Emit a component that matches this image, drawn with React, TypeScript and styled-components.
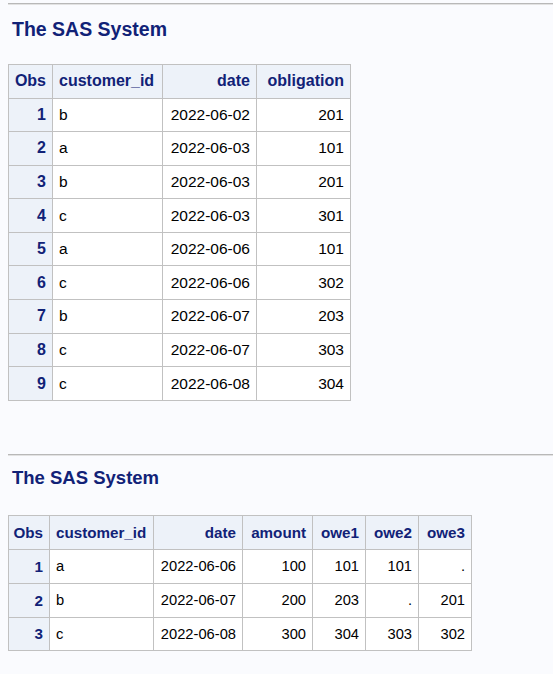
import React from "react";
import styled, { createGlobalStyle } from "styled-components";

const Global = createGlobalStyle`
  html, body { margin: 0; padding: 0; background: #fafbfe; }
  body { font-family: "Liberation Sans", Arial, sans-serif; }
`;

const Page = styled.div`
  padding: 3px 0 0 8px;
  display: flex;
  flex-direction: column;
`;

const Section = styled.section<{ $gapTop: number }>`
  display: flex;
  flex-direction: column;
  align-items: flex-start;
  margin-top: ${(p) => p.$gapTop}px;
`;

const Rule = styled.div`
  align-self: stretch;
  height: 0;
  border-top: 1px solid #b8b8b8;
  border-bottom: 1px solid #e2e2e2;
`;

const Title = styled.h1<{ $size: number; $top: number; $bottom: number }>`
  margin: ${(p) => p.$top}px 0 ${(p) => p.$bottom}px 4px;
  font-size: ${(p) => p.$size}px;
  line-height: 1.15;
  font-weight: bold;
  color: #112277;
`;

const Grid = styled.div<{ $cols: number[]; $rowH: number }>`
  display: grid;
  grid-template-columns: ${(p) => p.$cols.map((c) => c + "px").join(" ")};
  grid-auto-rows: ${(p) => p.$rowH}px;
  gap: 1px;
  border: 1px solid #c1c1c1;
  background: #c1c1c1;
`;

const Cell = styled.div<{ $fs: number; $kind: "head" | "rowhead" | "data"; $align: "left" | "right" }>`
  display: flex;
  align-items: center;
  justify-content: ${(p) => (p.$align === "right" ? "flex-end" : "flex-start")};
  padding: 0 6px;
  background: ${(p) => (p.$kind === "data" ? "#ffffff" : "#edf2f9")};
  color: ${(p) => (p.$kind === "data" ? "#000000" : "#112277")};
  font-weight: ${(p) => (p.$kind === "data" ? "normal" : "bold")};
  font-size: ${(p) => (p.$kind === "data" ? p.$fs - 0.5 : p.$fs)}px;
  white-space: nowrap;
`;

type Col = { name: string; align: "left" | "right" };

const DataTable = ({
  cols,
  widths,
  rowH,
  fs,
  rows,
}: {
  cols: Col[];
  widths: number[];
  rowH: number;
  fs: number;
  rows: string[][];
}) => (
  <Grid $cols={widths} $rowH={rowH} role="table">
    {cols.map((c) => (
      <Cell key={c.name} $fs={fs} $kind="head" $align={c.align} role="columnheader">
        {c.name}
      </Cell>
    ))}
    {rows.map((r, i) =>
      r.map((v, j) => (
        <Cell
          key={i + "-" + j}
          $fs={fs}
          $kind={j === 0 ? "rowhead" : "data"}
          $align={cols[j].align}
          role={j === 0 ? "rowheader" : "cell"}
        >
          {v}
        </Cell>
      ))
    )}
  </Grid>
);

const cols1: Col[] = [
  { name: "Obs", align: "right" },
  { name: "customer_id", align: "left" },
  { name: "date", align: "right" },
  { name: "obligation", align: "right" },
];

const rows1 = [
  ["1", "b", "2022-06-02", "201"],
  ["2", "a", "2022-06-03", "101"],
  ["3", "b", "2022-06-03", "201"],
  ["4", "c", "2022-06-03", "301"],
  ["5", "a", "2022-06-06", "101"],
  ["6", "c", "2022-06-06", "302"],
  ["7", "b", "2022-06-07", "203"],
  ["8", "c", "2022-06-07", "303"],
  ["9", "c", "2022-06-08", "304"],
];

const cols2: Col[] = [
  { name: "Obs", align: "right" },
  { name: "customer_id", align: "left" },
  { name: "date", align: "right" },
  { name: "amount", align: "right" },
  { name: "owe1", align: "right" },
  { name: "owe2", align: "right" },
  { name: "owe3", align: "right" },
];

const rows2 = [
  ["1", "a", "2022-06-06", "100", "101", "101", "."],
  ["2", "b", "2022-06-07", "200", "203", ".", "201"],
  ["3", "c", "2022-06-08", "300", "304", "303", "302"],
];

export default function App() {
  return (
    <>
      <Global />
      <Page>
        <Section $gapTop={0}>
          <Rule />
          <Title $size={19.5} $top={13} $bottom={23.5}>
            The SAS System
          </Title>
          <DataTable cols={cols1} widths={[43, 109, 93, 93]} rowH={32.6} fs={16} rows={rows1} />
        </Section>
        <Section $gapTop={53.5}>
          <Rule />
          <Title $size={18.5} $top={11} $bottom={26.5}>
            The SAS System
          </Title>
          <DataTable
            cols={cols2}
            widths={[40, 103, 88, 69, 52, 52, 52]}
            rowH={32.8}
            fs={15.2}
            rows={rows2}
          />
        </Section>
      </Page>
    </>
  );
}
